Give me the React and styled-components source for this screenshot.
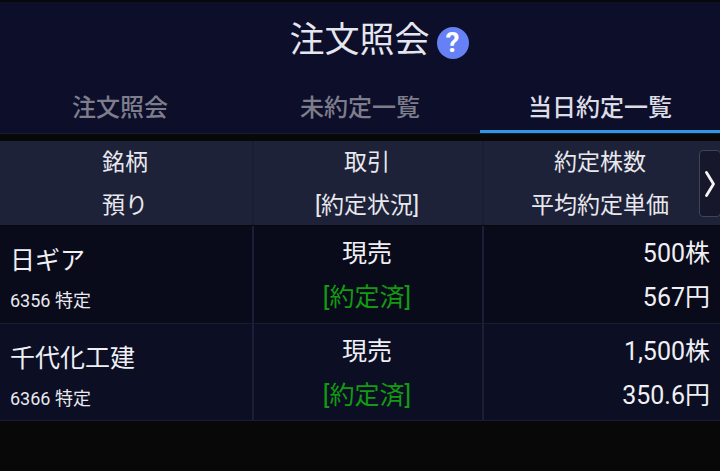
import React from "react";
import styled, { createGlobalStyle } from "styled-components";

const Global = createGlobalStyle`
  html, body { margin: 0; padding: 0; background: #080808; }
  body { font-family: Roboto, "Noto Sans CJK JP", sans-serif; }
`;

const Page = styled.div`
  width: 720px;
  height: 471px;
  overflow: hidden;
  padding-top: 2px;
  box-sizing: border-box;
  background: #080808;
`;

const Header = styled.header`
  height: 132px;
  box-sizing: border-box;
  background: #0c0e2a;
  border-bottom: 1px solid #191c38;
  display: flex;
  flex-direction: column;
`;

const TitleBar = styled.div`
  height: 76px;
  display: flex;
  align-items: center;
  justify-content: center;
  gap: 7px;
  padding: 2px 0 0 38px;
  box-sizing: border-box;
`;

const Title = styled.h1`
  margin: 0;
  font-size: 35px;
  line-height: 44px;
  font-weight: 400;
  color: #e6e6ee;
`;

const HelpBadge = styled.span`
  width: 32px;
  height: 32px;
  border-radius: 50%;
  background: #6680f5;
  color: #fff;
  font-size: 28px;
  font-weight: 700;
  line-height: 32px;
  text-align: center;
  font-family: Roboto, sans-serif;
  margin-top: 3px;
`;

const Tabs = styled.nav`
  flex: 1;
  display: grid;
  grid-template-columns: 240px 240px 240px;
`;

const Tab = styled.div`
  display: flex;
  align-items: center;
  justify-content: center;
  padding-top: 2px;
  box-sizing: border-box;
  font-size: 24px;
  font-weight: 500;
  color: ${(p) => (p.$active ? "#dcdce6" : "#7d7d8c")};
  border-bottom: 3px solid ${(p) => (p.$active ? "#3098dc" : "transparent")};
`;

const Table = styled.section`
  margin-top: 7px;
  position: relative;
`;

const COLS = "252px 230px 238px";

const HeadRow = styled.div`
  height: 84px;
  display: grid;
  grid-template-columns: ${COLS};
  background: #1e2238;
`;

const HeadCell = styled.div`
  box-sizing: border-box;
  display: flex;
  flex-direction: column;
  align-items: center;
  justify-content: center;
  gap: 11px;
  border-left: ${(p) => (p.$first ? "none" : "2px solid #1a1e33")};
  font-size: 23px;
  line-height: 32px;
  color: #e8e8ee;
  padding: 2px ${(p) => (p.$last ? "4px" : "2px")} 0 0;
`;

const HeadLine = styled.div`
  height: 32px;
`;

const Row = styled.div`
  height: ${(p) => (p.$first ? "98px" : "97px")};
  box-sizing: border-box;
  margin-top: ${(p) => (p.$first ? "1px" : "0")};
  display: grid;
  grid-template-columns: ${COLS};
  background: ${(p) => (p.$alt ? "#0c0f24" : "#0a0b1a")};
  border-bottom: 1px solid #191c34;
`;

const NameCell = styled.div`
  display: flex;
  flex-direction: column;
  padding: 17px 0 0 10px;
`;

const Name = styled.div`
  font-size: 25px;
  line-height: 36px;
  color: #f0f0f4;
`;

const Meta = styled.div`
  margin-top: 10px;
  font-size: 18px;
  line-height: 24px;
  color: #e8e8ee;
`;

const Cell = styled.div`
  box-sizing: border-box;
  border-left: 2px solid #1a1e36;
  display: flex;
  flex-direction: column;
  align-items: ${(p) => (p.$right ? "flex-end" : "center")};
  padding: 10px ${(p) => (p.$right ? "10px" : "2px")} 0 0;
  gap: 8px;
`;

const Value = styled.div`
  font-size: 25px;
  line-height: 36px;
  color: ${(p) => p.$color || "#f0f0f4"};
`;

const PagerButton = styled.div`
  position: absolute;
  right: -1px;
  top: 9px;
  width: 22px;
  height: 67px;
  box-sizing: border-box;
  border: 1px solid #40445a;
  border-radius: 4px;
  background: #16172a;
  display: flex;
  align-items: center;
  justify-content: center;
`;

const rows = [
  { name: "日ギア", meta: "6356 特定", qty: "500株", price: "567円" },
  { name: "千代化工建", meta: "6366 特定", qty: "1,500株", price: "350.6円", alt: true },
];

export default function App() {
  return (
    <Page>
      <Global />
      <Header>
        <TitleBar>
          <Title>注文照会</Title>
          <HelpBadge>?</HelpBadge>
        </TitleBar>
        <Tabs>
          <Tab>注文照会</Tab>
          <Tab>未約定一覧</Tab>
          <Tab $active>当日約定一覧</Tab>
        </Tabs>
      </Header>
      <Table>
        <HeadRow>
          <HeadCell $first>
            <HeadLine>銘柄</HeadLine>
            <HeadLine>預り</HeadLine>
          </HeadCell>
          <HeadCell>
            <HeadLine>取引</HeadLine>
            <HeadLine>[約定状況]</HeadLine>
          </HeadCell>
          <HeadCell $last>
            <HeadLine>約定株数</HeadLine>
            <HeadLine>平均約定単価</HeadLine>
          </HeadCell>
        </HeadRow>
        <PagerButton>
          <svg width="12" height="26" viewBox="0 0 12 26" fill="none">
            <path d="M2.5 1.5 L9.5 13 L2.5 24.5" stroke="#f4f4f8" strokeWidth="2.8" strokeLinecap="round" strokeLinejoin="round" />
          </svg>
        </PagerButton>
        {rows.map((r, i) => (
          <Row key={r.meta} $first={i === 0} $alt={r.alt}>
            <NameCell>
              <Name>{r.name}</Name>
              <Meta>{r.meta}</Meta>
            </NameCell>
            <Cell>
              <Value>現売</Value>
              <Value $color="#129a12">[約定済]</Value>
            </Cell>
            <Cell $right>
              <Value>{r.qty}</Value>
              <Value>{r.price}</Value>
            </Cell>
          </Row>
        ))}
      </Table>
    </Page>
  );
}
